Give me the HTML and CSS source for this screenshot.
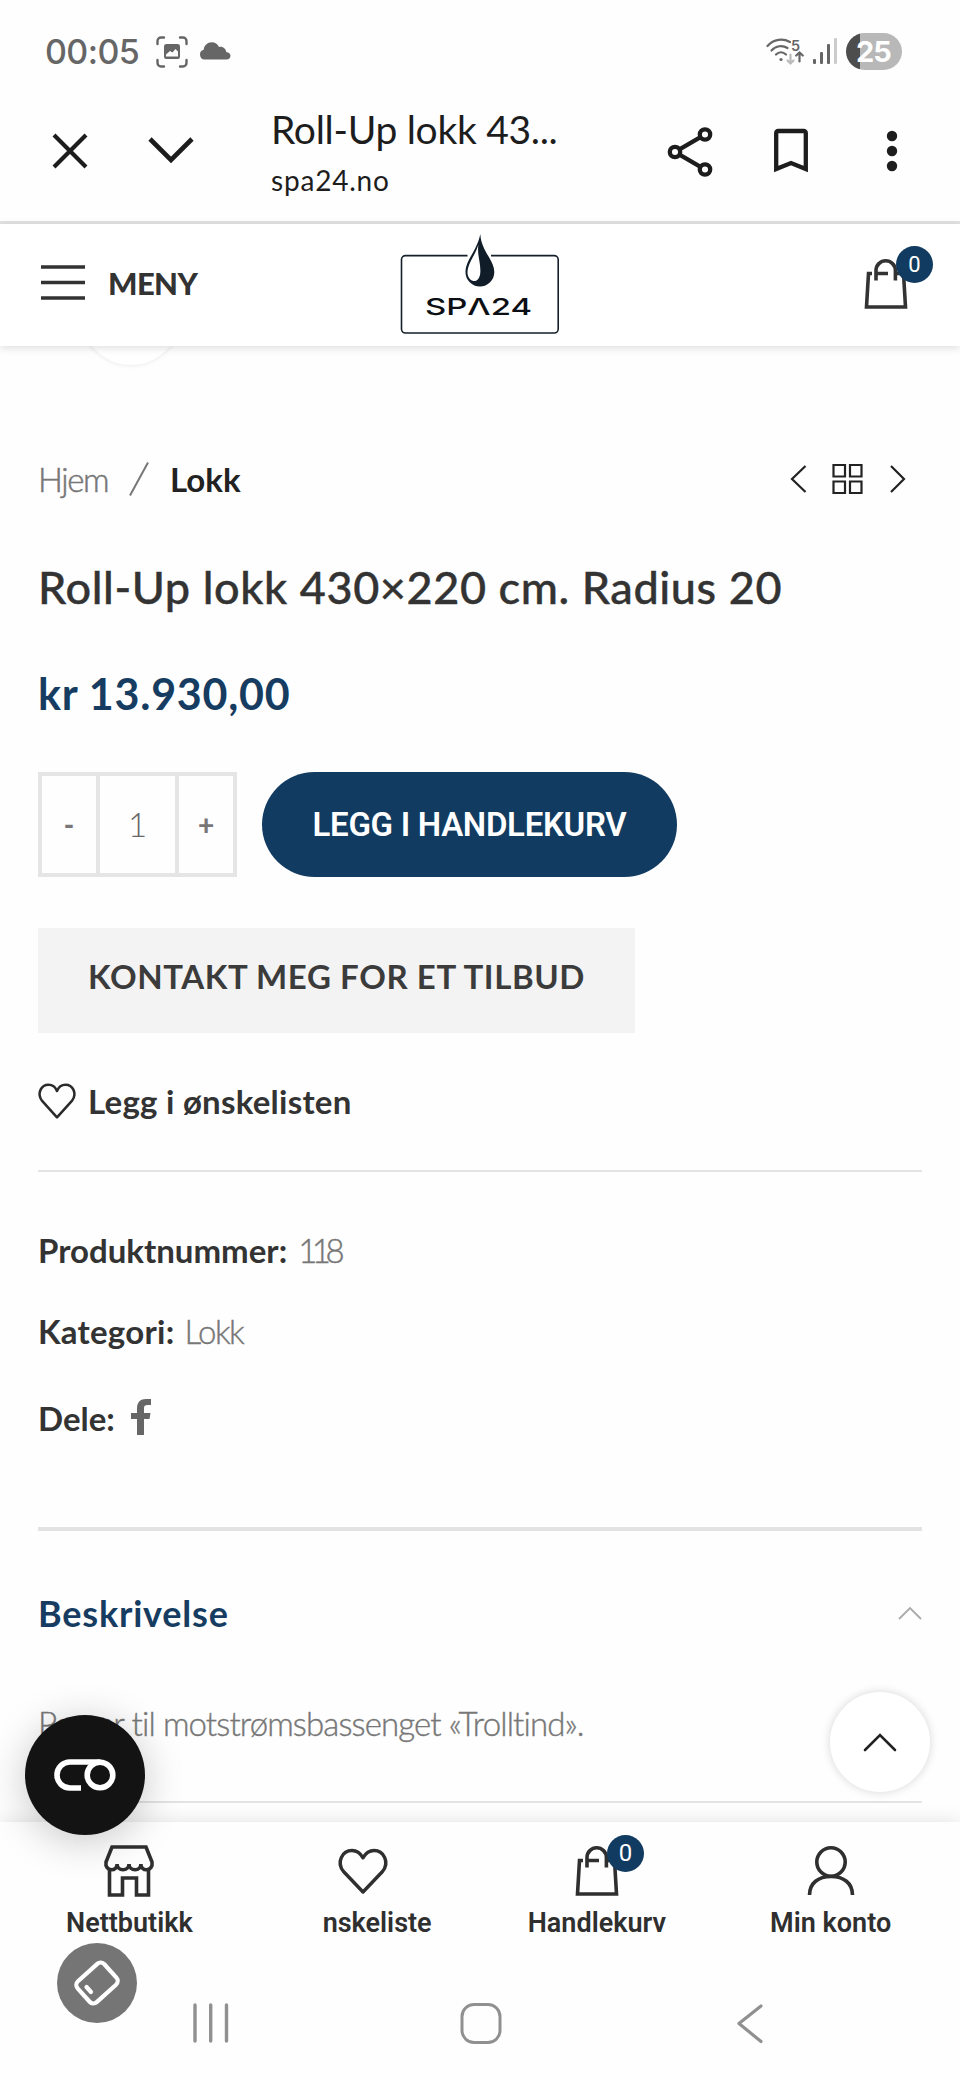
FILE: index.html
```html
<!DOCTYPE html>
<html lang="no"><head><meta charset="utf-8"><title>Roll-Up lokk 430×220 cm. Radius 20</title>
<link rel="stylesheet" href="styles.css"></head>
<body>
<div class="status">
  <span class="clock">00:05</span>
  <svg class="st-shot" width="32" height="32" viewBox="0 0 32 32" fill="none" stroke="#666" stroke-width="2.4" stroke-linecap="round"><path d="M1.500 8V5a3.500 3.500 0 0 1 3.500-3.500h3M24 1.500h3A3.500 3.500 0 0 1 30.500 5v3M30.500 24v3a3.500 3.500 0 0 1-3.500 3.500h-3M8 30.500H5A3.500 3.500 0 0 1 1.500 27v-3"/><path fill="#666" stroke="none" fill-rule="evenodd" d="M10.500 8h11a2.500 2.500 0 0 1 2.500 2.500v10a2.500 2.500 0 0 1-2.500 2.500h-11A2.500 2.500 0 0 1 8 20.500v-10A2.500 2.500 0 0 1 10.500 8zM10 20.500h12v-5l-2.500-2.500-3 3.500-2.500-1.500-4 3.500z"/></svg>
  <svg class="st-cloud" width="32" height="18" viewBox="0 0 32 18" fill="#666"><path d="M5.500 17.500a5 5 0 0 1-.8-9.800C5 3.500 8.500.3 12.700.3c3.300 0 6 1.900 7.300 4.700 3.600-.8 6.700 1.500 7.300 4.900 2.500.2 4.200 1.800 4.200 3.900 0 2.200-1.700 3.700-4 3.700z"/></svg>
  <span class="spacer"></span>
  <svg class="st-wifi" width="40" height="28" viewBox="0 0 40 28" fill="none" stroke="#666" stroke-width="2.200" stroke-linecap="round"><path d="M1.500 8C8 .7 17 .3 24 4M5.500 12.500C10 7.500 16.500 7 21.500 10M10 16.500c3-3 7-3 10 0"/><circle cx="15" cy="21.500" r="1.600" fill="#666" stroke="none"/><path stroke="#bbb" d="M24.500 16.500v9m-3-3l3 3 3-3"/><path d="M33.500 23.500v-9m-3.300 3l3.300-3 3.300 3"/><text x="25" y="12.500" font-size="14.500" fill="#666" stroke="none" class="wifi-n">5</text></svg>
  <svg class="st-sig" width="26" height="27" viewBox="0 0 26 27" fill="#666"><rect x="1" y="21" width="3" height="5" rx="1"/><rect x="8" y="14" width="3" height="12" rx="1"/><rect x="15" y="6" width="3" height="20" rx="1"/><rect x="22" y="0" width="3" height="26" rx="1" fill="#ccc"/></svg>
  <span class="battery">25</span>
</div>

<div class="browser">
  <svg class="b-x" width="36" height="36" viewBox="0 0 36 36" fill="none" stroke="#1d1d1d" stroke-width="4.200"><path d="M2 2l32 32M34 2L2 34"/></svg>
  <svg class="b-down" width="46" height="27" viewBox="0 0 46 27" fill="none" stroke="#1d1d1d" stroke-width="4.600"><path d="M2 2l21 21L44 2"/></svg>
  <div class="b-text"><div class="b-title">Roll-Up lokk 43...</div><div class="b-url">spa24.no</div></div>
  <span class="spacer"></span>
  <svg class="b-share" width="46" height="50" viewBox="0 0 46 50" fill="none" stroke="#1d1d1d" stroke-width="4.300"><circle cx="38" cy="7.500" r="5.200"/><circle cx="8" cy="25" r="5.200"/><circle cx="38" cy="42.500" r="5.200"/><path d="M12.500 22.400l21-12.200M12.500 27.600l21 12.200"/></svg>
  <svg class="b-mark" width="36" height="46" viewBox="0 0 36 46" fill="none" stroke="#1d1d1d" stroke-width="4.300"><path d="M3.200 41V5a2 2 0 0 1 2-2h25.600a2 2 0 0 1 2 2v36L18 35z"/></svg>
  <svg class="b-dots" width="12" height="42" viewBox="0 0 12 42" fill="#1d1d1d"><circle cx="6" cy="6" r="5.200"/><circle cx="6" cy="21" r="5.200"/><circle cx="6" cy="36" r="5.200"/></svg>
</div>

<header class="site">
  <div class="menu"><svg width="44" height="36" viewBox="0 0 44 36" stroke="#333" stroke-width="3.600"><path d="M0 2h44M0 17.500h44M0 33h44"/></svg><span class="menu-label">MENY</span></div>
  <svg class="logo" width="180" height="110" viewBox="390 230 180 110">
    <path d="M467.500 255.600H405.500a4 4 0 0 0-4 4V329a4 4 0 0 0 4 4H554.200a4 4 0 0 0 4-4V259.600a4 4 0 0 0-4-4H491" fill="none" stroke="#15202b" stroke-width="1.600"/>
    <path d="M480.300 234c.8 17 14 26 14 38a14.300 14.300 0 0 1-28.800 0c0-12 11.500-21 14.800-38z" fill="#101c28"/>
    <path d="M478.400 244.500c-1.500 11 2.500 18 1.900 28-.4 6-3.300 9.200-7 8.500-3.600-.9-6-4.400-5.800-9 .4-9 8-17 10.900-27.500z" fill="#fff"/>
    <text x="425" y="314.500" textLength="107" lengthAdjust="spacingAndGlyphs" class="logo-t">SPΛ24</text>
  </svg>
  <div class="cart">
    <svg width="44" height="52" viewBox="0 0 44 52" fill="none" stroke="#333" stroke-width="3.600"><path d="M8 15.500H4.500L2.500 49h39L39.500 15.500H32M12 22.500V12.500a9.700 9.700 0 0 1 19.400 0v10M12 15.500h12"/></svg>
    <span class="badge">0</span>
  </div>
</header>

<main>
  <div class="crumbs">
    <span class="c-home">Hjem</span><svg width="20" height="34" viewBox="0 0 20 34" stroke="#777" stroke-width="2"><path d="M1 33.500L19 .5"/></svg><b class="c-cur">Lokk</b>
    <span class="spacer"></span>
    <svg width="115" height="32" viewBox="0 0 115 32" fill="none" stroke="#222" stroke-width="2.200"><path d="M15.500 3L2 16l13.500 13M101 3l13 13-13 13"/><path d="M43.500 2h11.500v11.500H43.500zM60 2h11.500v11.500H60zM43.500 18.500h11.500V30H43.500zM60 18.500h11.500V30H60z"/></svg>
  </div>
  <h1>Roll-Up lokk 430×220 cm. Radius 20</h1>
  <div class="price">kr 13.930,00</div>
  <div class="buy">
    <div class="qty"><span class="q-s">-</span><span class="q-n">1</span><span class="q-s">+</span></div>
    <div class="add">LEGG I HANDLEKURV</div>
  </div>
  <div class="contact">KONTAKT MEG FOR ET TILBUD</div>
  <div class="wish"><svg width="38" height="36" viewBox="0 0 49 46" fill="none" stroke="#2b2b2b" stroke-width="3.300" stroke-linejoin="round"><path d="M24.500 44L5 22.500C-2 13 4.500 2 13.500 2c5 0 9 3 11 8 2-5 6-8 11-8C44.500 2 51 13 44 22.500z"/></svg><span>Legg i ønskelisten</span></div>
  <div class="rule"></div>
  <div class="meta m1"><b>Produktnummer:</b><span>118</span></div>
  <div class="meta m2"><b>Kategori:</b><span>Lokk</span></div>
  <div class="meta m3"><b>Dele:</b><svg width="20" height="36" viewBox="0 0 20 36" fill="#666"><path d="M6 36V20H0v-6h6V9.500C6 3 9.500 0 15 0h5v6h-3.500C14 6 13 7 13 9.300V14h6.500l-1 6H13v16z"/></svg></div>
  <div class="rule thick"></div>
  <div class="acc"><span>Beskrivelse</span><svg width="24" height="14" viewBox="0 0 24 14" fill="none" stroke="#aaa" stroke-width="1.800"><path d="M1 13L12 2l11 11"/></svg></div>
  <p class="desc">Passer til motstrømsbassenget «Trolltind».</p>
  <div class="rule last"></div>
</main>

<div class="zoomcircle"></div>
<div class="totop"><svg width="34" height="20" viewBox="0 0 34 20" fill="none" stroke="#222" stroke-width="2.600" stroke-linecap="round"><path d="M2 18L17 3l15 15"/></svg></div>

<footer>
  <div class="tabs">
    <div class="tab"><svg width="50" height="52" viewBox="0 0 50 52" fill="none" stroke="#2f2f2f" stroke-width="3.600"><path d="M8 2h34l6 15c.8 4.500-2 7.800-5.500 7.800-3.200 0-5.600-2.400-5.600-5.800 0 3.400-2.600 5.800-5.800 5.800S25 22.400 25 19c0 3.400-2.800 5.800-6 5.800s-5.900-2.400-5.900-5.800c0 3.400-2.400 5.800-5.600 5.800C4 24.800 1.200 21.500 2 17z"/><path d="M5.500 25v25h13V33h14v17h12V25"/></svg><span>Nettbutikk</span></div>
    <div class="tab t2"><svg width="50" height="52" viewBox="0 0 50 52" fill="none" stroke="#2f2f2f" stroke-width="3.400" stroke-linejoin="round"><path d="M25 47L5.500 26.500C-2 17 4.500 5.500 14 5.500c5 0 8.500 3 11 7.300 2.500-4.300 6-7.300 11-7.300 9.500 0 16 11.500 8.500 21z"/></svg><span>nskeliste</span></div>
    <div class="tab t3"><svg width="44" height="52" viewBox="0 0 44 52" fill="none" stroke="#2f2f2f" stroke-width="3.600"><path d="M8 15.500H4.500L2.500 49h39L39.500 15.500H32M12 22.500V12.500a9.700 9.700 0 0 1 19.400 0v10M12 15.500h12"/></svg><i class="badge">0</i><span>Handlekurv</span></div>
    <div class="tab t4"><svg width="50" height="52" viewBox="0 0 50 52" fill="none" stroke="#2f2f2f" stroke-width="3.600"><circle cx="25" cy="17" r="14.200"/><path d="M3.500 50c0-12 9-18.500 21.500-18.500S46.500 38 46.500 50"/></svg><span>Min konto</span></div>
  </div>
  <div class="nav">
    <svg width="36" height="40" viewBox="0 0 36 40" stroke="#909090" stroke-width="3.400" stroke-linecap="round"><path d="M2 3v36M17.700 3v36M33.500 3v36"/></svg>
    <svg class="n-home" width="42" height="42" viewBox="0 0 42 42" fill="none" stroke="#909090" stroke-width="3"><rect x="2" y="2.500" width="38" height="38" rx="12"/></svg>
    <svg width="28" height="42" viewBox="0 0 28 42" fill="none" stroke="#909090" stroke-width="3.200" stroke-linecap="round" stroke-linejoin="round"><path d="M26 4L4 21.500l22 18"/></svg>
  </div>
</footer>
<div class="cookie"><svg width="62" height="32" viewBox="0 0 62 32" fill="none" stroke="#fff" stroke-width="5.600"><path d="M46.500 3H16a13 13 0 0 0 0 26h11"/><circle cx="46" cy="16" r="12.800"/></svg></div>
<div class="rotate"><svg width="50" height="50" viewBox="0 0 50 50" fill="none" stroke="#fff" stroke-width="4.200" stroke-linecap="round"><rect x="7" y="11" width="36" height="28" rx="5" transform="rotate(-42 25 25)"/><path d="M14.500 29l4.500 5"/></svg></div>
</body></html>
```
FILE: styles.css
```css
*{box-sizing:border-box}
body{margin:0;width:960px;height:2080px;position:relative;overflow:hidden;background:#fefefe;font-family:Lato,"Open Sans",sans-serif;color:#333;font-variant-ligatures:none}
svg{display:block;flex:none;overflow:visible}
.spacer{flex:1}
.status{height:100px;display:flex;align-items:flex-start;padding:0 58px 0 45px;color:#666}
.clock{font:500 34px/40px Inter,sans-serif;letter-spacing:-.6px;margin-top:32px;width:96px;white-space:nowrap}
.st-shot{margin:36px 0 0 15px}.st-cloud{margin:42px 0 0 11px}
.st-wifi{margin:38px 6px 0 0}.st-sig{margin:38px 8px 0 0}
.wifi-n{font-family:Inter,sans-serif;font-weight:600}
.battery{width:56px;height:37px;margin-top:33px;border-radius:19px;background:linear-gradient(90deg,#4d4d4d 14px,#b8b8b8 14px);color:#fff;font:700 29px/37px Inter,sans-serif;letter-spacing:-1px;text-align:center;padding-right:1px}
.browser{height:124px;border-bottom:3px solid #e2e2e2;display:flex;align-items:flex-start;padding:0 62px 0 52px;color:#1d1d1d}
.b-x{margin:33px 0 0}.b-down{margin:37px 0 0 60px}
.b-text{margin-left:77px;padding-top:4px;white-space:nowrap}
.b-title{font-size:39px;line-height:50px;letter-spacing:-.3px}
.b-url{font-size:28px;line-height:44px;margin-top:4px;letter-spacing:.8px}
.b-share{margin:27px 60px 0 0}.b-mark{margin:28px 77px 0 0}.b-dots{margin:30px 0 0}
.site{height:122px;display:grid;grid-template-columns:1fr 180px 1fr;align-items:start;box-shadow:0 2px 8px rgba(0,0,0,.13);background:#fff;position:relative;z-index:2}
.menu{display:flex;padding:41px 0 0 41px}
.menu-label{font-size:31px;font-weight:900;line-height:36px;margin-left:23px;letter-spacing:-.6px}
.logo{margin-top:6px}
.logo-t{font-family:Inter,sans-serif;font-weight:500;font-size:23px;fill:#0b0f14}
.cart{justify-self:end;position:relative;margin:34px 52px 0 0}
.badge{position:absolute;left:32px;top:-12px;width:37px;height:37px;border-radius:50%;background:#113b60;color:#fff;font:400 22px/37px Roboto,sans-serif;text-align:center}
main{padding:0 38px}
.crumbs{margin-top:103px;height:60px;display:flex;align-items:center;font-size:33px;padding-right:17px;color:#777}
.c-home{width:91px;font-weight:300;letter-spacing:-1.400px;color:#777;-webkit-text-stroke:.5px #777}
.c-cur{color:#222;margin-left:21px}
h1{margin:48px 0 0;font-size:45px;line-height:60px;font-weight:500;letter-spacing:.6px;-webkit-text-stroke:.4px #333;white-space:nowrap}
.price{padding-top:1px;margin:46px 0 -1px;font-size:43px;line-height:60px;font-weight:700;letter-spacing:.75px;color:#163d61;white-space:nowrap}
.buy{margin-top:49px;display:flex;gap:25px}
.qty{width:199px;height:105px;border:4px solid #e5e5e5;display:grid;grid-template-columns:54px 1fr 54px;line-height:97px;text-align:center;color:#777}
.q-n{border:solid #e5e5e5;border-width:0 4px;font-size:33px;font-weight:300;color:#666}
.q-s{font-size:28px;font-weight:900}
.add{width:415px;height:105px;border-radius:53px;background:#113b60;color:#fff;text-align:center;font:600 33px/105px Roboto,sans-serif;letter-spacing:-.3px;white-space:nowrap}
.contact{margin-top:51px;width:597px;height:105px;background:#f3f3f3;padding-bottom:8px;line-height:97px;text-align:center;font-size:33px;font-weight:700;letter-spacing:.6px;color:#3b3b3b;white-space:nowrap}
.wish{margin-top:48px;height:40px;display:flex;align-items:center;gap:12px;font-size:33px;font-weight:700;line-height:40px;letter-spacing:.25px}
.rule{height:2px;margin-top:49px;background:#e3e3e3}
.meta{height:40px;line-height:40px;font-size:33px;display:flex;white-space:nowrap;color:#777;font-weight:300}
.meta span{-webkit-text-stroke:.4px #777}
.meta b{color:#333;font-weight:700}.m1{margin-top:58px}.m2{margin-top:41px}.m3{margin-top:47px}
.m1 span{margin-left:11px;letter-spacing:-5.500px}.m2 b{letter-spacing:.25px}.m2 span{margin-left:10px;letter-spacing:-1.500px}.m3 svg{margin:1px 0 0 16px}
.thick{height:4px;margin-top:89px}
.acc{margin-top:62px;height:40px;line-height:40px;font-size:36px;font-weight:700;letter-spacing:.8px;color:#163d61;display:flex;justify-content:space-between;align-items:center}
.desc{margin:70px 0 0;font-size:33px;font-weight:300;line-height:40px;letter-spacing:-.88px;color:#777;-webkit-text-stroke:.4px #777;white-space:nowrap}
.last{margin-top:58px}
.zoomcircle{position:absolute;left:81px;top:265px;width:100px;height:100px;border-radius:50%;background:#fff;box-shadow:0 0 5px rgba(0,0,0,.1)}
.totop{position:absolute;left:830px;top:1692px;width:100px;height:100px;border-radius:50%;background:#fff;box-shadow:0 0 10px rgba(0,0,0,.16);display:grid;place-items:center}
footer{position:absolute;left:0;right:0;top:1822px;height:258px;background:#fefefe;box-shadow:0 0 18px rgba(0,0,0,.12)}
.tabs{display:grid;grid-template-columns:1fr 1fr 1fr 1fr;padding:23px 12.500px;color:#2f2f2f}
.tab{display:flex;flex-direction:column;align-items:center;font:600 27px/34px Roboto,sans-serif;position:relative}
.tab>span{margin-top:9px}
.t2>span{margin-left:28px}
.tab .badge{left:127px;top:-10px;font-size:24px}
.nav{display:flex;justify-content:space-between;padding:39px 197px 0 193px}
.n-home{margin-left:-3px}
.cookie{position:absolute;left:25px;top:1715px;width:120px;height:120px;border-radius:50%;background:#131313;box-shadow:0 6px 40px rgba(0,0,0,.22);display:grid;place-items:center}
.rotate{position:absolute;left:57px;top:1943px;width:80px;height:80px;border-radius:50%;background:#757575;display:grid;place-items:center}
```
